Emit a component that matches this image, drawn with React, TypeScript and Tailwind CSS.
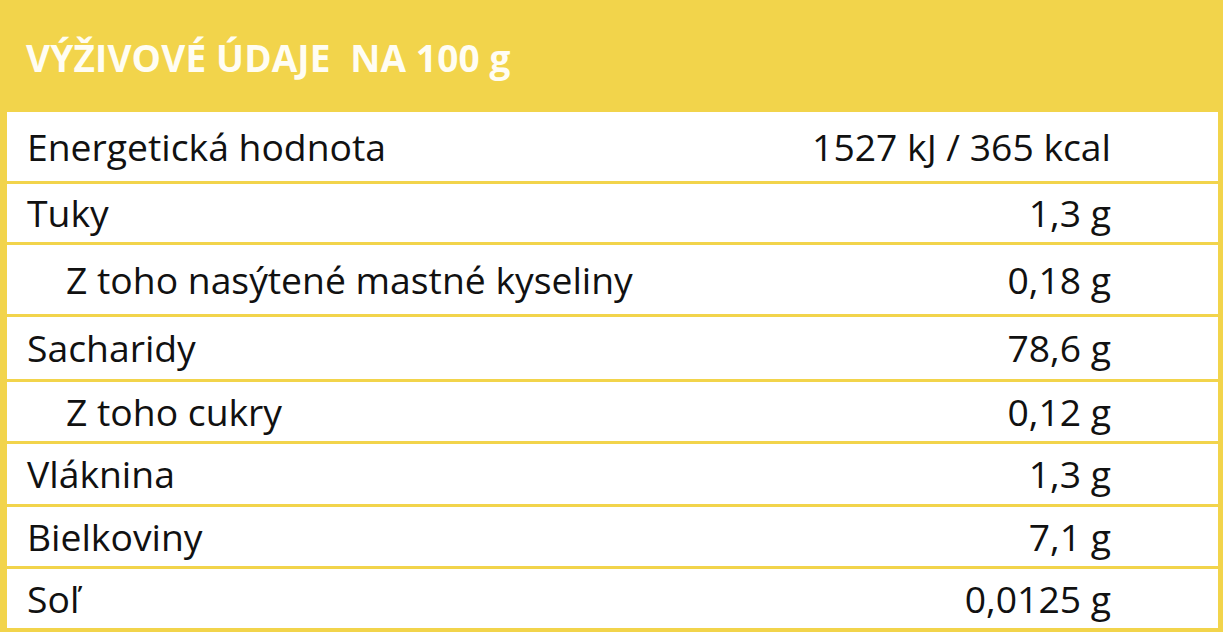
import React from "react";

const rows: { label: string; value: string; indent?: boolean; h: string }[] = [
  { label: "Energetická hodnota", value: "1527 kJ / 365 kcal", h: "h-[69px]" },
  { label: "Tuky", value: "1,3 g", h: "h-[58px]" },
  { label: "Z toho nasýtené mastné kyseliny", value: "0,18 g", indent: true, h: "h-[69px]" },
  { label: "Sacharidy", value: "78,6 g", h: "h-[62px]" },
  { label: "Z toho cukry", value: "0,12 g", indent: true, h: "h-[59px]" },
  { label: "Vláknina", value: "1,3 g", h: "h-[60px]" },
  { label: "Bielkoviny", value: "7,1 g", h: "h-[59px]" },
  { label: "Soľ", value: "0,0125 g", h: "h-[59px]" },
];

export default function App() {
  return (
    <div
      className="w-[1223px] h-[632px] bg-[#f2d44b] flex flex-col overflow-hidden"
      style={{ fontFamily: '"Open Sans", "Noto Sans", sans-serif' }}
    >
      <div className="h-[112px] flex items-center pl-[26px] pt-[2px]">
        <h1 className="text-[37px] font-bold text-[#fffdf3] tracking-[0.15px] whitespace-pre leading-none">
          {"VÝŽIVOVÉ ÚDAJE  NA 100 g"}
        </h1>
      </div>
      <div className="ml-[7px] mr-[5px] flex flex-col gap-[3px]">
        {rows.map((r) => (
          <div
            key={r.label}
            className={`${r.h} bg-white flex items-center justify-between pl-[20px] pr-[107px] text-[37.3px] text-[#111] leading-none`}
          >
            <span className={r.indent ? "pl-[39px]" : ""}>{r.label}</span>
            <span>{r.value}</span>
          </div>
        ))}
      </div>
    </div>
  );
}
